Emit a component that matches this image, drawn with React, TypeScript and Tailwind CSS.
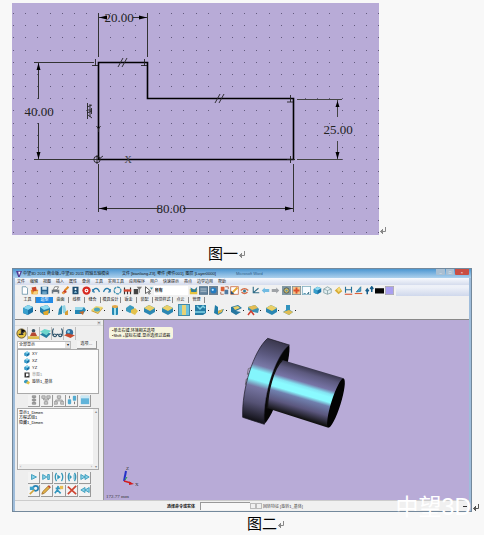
import type { ReactNode } from "react";

const cjk = "font-['Liberation_Sans','Noto_Sans_CJK_SC',sans-serif]";

function ReturnMark({ dark = false }: { dark?: boolean }) {
  return (
    <svg viewBox="0 0 8 9" className={dark ? "h-[9px] w-2 shrink-0 text-[#555]" : "h-[9px] w-2 shrink-0 text-[#888]"} aria-hidden="true">
      <path d="M6.5 1V5.5H2M4 3L1.5 5.5L4 8" fill="none" stroke="currentColor" />
      <path d="M1 5.5L4 3.2V7.8Z" fill="currentColor" />
    </svg>
  );
}

const dots = Array.from({ length: 31 * 19 }, (_, i) => ({
  x: Math.round(13 + (i % 31) * 12.167),
  y: Math.round(13 + Math.floor(i / 31) * 12.17),
}));

function Sketch() {
  return (
    <svg viewBox="12 3 367 232" className="h-[232px] w-[367px] shrink-0 bg-[#b8abd7]" role="img" aria-label="图一">
      {dots.map((d) => (
        <rect key={`${d.x}-${d.y}`} x={d.x} y={d.y} width="1" height="1" fill="#625a7c" />
      ))}
      <g stroke="#333" fill="none">
        <path d="M98.5 13V57M147.5 13V57M99 17.5H106M133 17.5H147" />
        <path d="M34 62.5H94M34 159.5H98M38.5 63V99M38.5 123V159" />
        <path d="M297 99.5H342M297 159.5H342M337.5 100V117M337.5 141V159" stroke="#444" />
        <path d="M98.5 164V212M293.5 164V212M99 208.5H160M183 208.5H293" />
      </g>
      <path
        d="M99 17.5L107 15.5V19.5ZM147 17.5L139 15.5V19.5ZM38.5 63L36.5 70H40.5ZM38.5 159L36.5 152H40.5ZM337.5 101L335.5 107H339.5ZM337.5 159L335.5 152H339.5ZM99 208.5L107 206.5V210.5ZM293 208.5L285 206.5V210.5Z"
        fill="#000"
      />
      <path d="M98.5 159.5V62.5H147.5V98.5H293.5V159.5Z" fill="none" stroke="#000" strokeWidth="1.6" />
      <g stroke="#222" fill="none" strokeWidth="0.9">
        <path d="M118 67L123 58M122 67L127 58M215 103L220 94M219 103L224 94" />
        <path d="M95.500 59V66M92 65.500H98M144.500 59V66M141 65.500H147M290.500 95V102M287 102H293M290.500 156V163M287 159.500H295" />
        <circle cx="97" cy="159.500" r="3.200" />
        <path d="M97 155V164M99 159L103 156" />
        <path d="M96.500 126L98.500 129L100.500 126M98.500 129V132" />
        <path d="M87.500 103V119M90 104V117M87 107L92 105M88 110H92M87 113L92 111M88 115L92 118M91.500 108V114" />
      </g>
      <g className="font-['Liberation_Serif',serif]" fill="#222" fontSize="13" textAnchor="middle">
        <text x="119" y="22">20.00</text>
        <text x="39" y="116">40.00</text>
        <text x="338" y="134">25.00</text>
        <text x="171" y="213">80.00</text>
        <text x="128" y="163" fontSize="10" fill="#444">X</text>
      </g>
    </svg>
  );
}

type Kind =
  | "page" | "open" | "save" | "print" | "brush" | "book" | "target" | "undo" | "redo" | "ring" | "magnet" | "filter" | "pick"
  | "folder" | "screen" | "globe" | "swap" | "edit" | "wheel" | "axes" | "left" | "right" | "at" | "plus" | "frame" | "cube" | "wire"
  | "gold" | "height" | "slope" | "steps" | "black" | "lilac" | "cubeGold" | "twist" | "slab" | "plate" | "cylinder" | "pair" | "panel"
  | "grid" | "bend" | "cut" | "stamp" | "clock" | "person" | "layers" | "glasses" | "ball" | "stack" | "tree" | "tree2" | "pins"
  | "tile" | "play" | "next" | "paren" | "parens" | "fast" | "rewind" | "tag" | "pencil" | "run" | "cross" | "sheet";

const art: Record<Kind, ReactNode> = {
  page: <path d="M3 1H8L10 3V11H3Z" fill="#fff" stroke="#5b8aa0" />,
  open: <><path d="M1 5H11L10 11H2Z" fill="#e69a31" /><path d="M2 2L8 1L9 6L4 8Z" fill="#c84528" /><path d="M5 7H11L9 11H4Z" fill="#f7d27c" /></>,
  save: <><rect x="1" y="1" width="10" height="10" fill="#245f8c" /><rect x="3" y="1" width="6" height="4" fill="#d5e8f2" /><rect x="3" y="7" width="6" height="4" fill="#6aa2c4" /></>,
  print: <><rect x="1" y="5" width="10" height="5" fill="#6b7680" /><path d="M3 5L5 1H10L8 5Z" fill="#fff" stroke="#666" /><path d="M3 8H9V11H3Z" fill="#e8e8e8" /></>,
  brush: <><path d="M10 1L5 6" stroke="#e08a20" strokeWidth="2.500" /><path d="M5 5L8 8L3 11L1 9Z" fill="#c93f24" /><path d="M1 9L5 8L3 11Z" fill="#f0c74d" /></>,
  book: <><rect x="2" y="1" width="8" height="10" fill="#1d4d70" /><circle cx="6" cy="4" r="1.500" fill="#fff" /><path d="M4 9Q6 4 8 9" fill="#9ed4ea" /></>,
  target: <><circle cx="6" cy="6" r="5.500" fill="#d72b21" /><circle cx="6" cy="6" r="2.500" fill="#fff" /><circle cx="6" cy="6" r="1" fill="#d72b21" /></>,
  undo: <path d="M1 8C3 1 8 2 10 8M1 8V4M1 8H4" fill="none" stroke="#277bab" strokeWidth="1.500" />,
  redo: <path d="M11 8C9 1 4 2 2 8M11 8V4M11 8H8" fill="none" stroke="#277bab" strokeWidth="1.500" />,
  ring: <circle cx="6" cy="6" r="4.500" fill="none" stroke="#348bad" strokeWidth="1.600" strokeDasharray="4 1" />,
  magnet: <><path d="M2 11V2M6 11V5M10 11V2" stroke="#333" strokeWidth="1.500" /><path d="M1 6H11" stroke="#d0442e" strokeWidth="3" /></>,
  filter: <><rect x="1" y="4" width="6" height="7" fill="#444" /><path d="M5 1H12L9 5V9H8V5Z" fill="#777" /></>,
  pick: <><path d="M2 1V10L5 8L7 11L8 10L6 7H9Z" fill="#fff" stroke="#333" /><path d="M8 2H12L10 5Z" fill="#3b8da8" /></>,
  folder: <><path d="M1 4H11V11H1Z" fill="#e6c33f" /><path d="M2 2L7 5L11 1L10 8H3Z" fill="#2e7e9c" /></>,
  screen: <><rect x="0.500" y="1" width="11" height="10" fill="#6987a0" stroke="#3a5d79" /><path d="M2 4H10M2 7H10" stroke="#bfcfda" /></>,
  globe: <><rect x="0" y="0" width="12" height="12" fill="#6d8294" /><circle cx="6" cy="6" r="4" fill="#247cc1" /><circle cx="5" cy="5" r="1.500" fill="#bce5ff" /></>,
  swap: <><rect x="1" y="1" width="5" height="6" fill="#d96037" /><rect x="6" y="5" width="5" height="6" fill="#507aa0" /><path d="M7 1H11V4M1 8V11H5" fill="none" stroke="#9a4f38" /></>,
  edit: <><rect x="1" y="1" width="10" height="10" fill="#fff" stroke="#c75f32" /><path d="M3 9L10 2" stroke="#e4ab37" strokeWidth="2.500" /><path d="M1 6V11H6Z" fill="#274f75" /></>,
  wheel: <><path d="M1 6Q6 1 11 6M2 8Q6 12 10 8" fill="none" stroke="#d66b46" strokeWidth="1.800" /><circle cx="6" cy="6.500" r="2" fill="#337c96" /></>,
  axes: <path d="M3 1V9H11M3 9L10 3" fill="none" stroke="#316e88" strokeWidth="1.500" />,
  left: <path d="M1 6L5 2V4H11V8H5V10Z" fill="#71bbe2" />,
  right: <path d="M11 6L7 2V4H1V8H7V10Z" fill="#9fa3a7" />,
  at: <><rect width="12" height="12" fill="#8299a3" /><circle cx="6" cy="6" r="3.500" fill="#e5c254" stroke="#31485a" /><circle cx="6" cy="6" r="1.500" fill="#5296bb" /></>,
  plus: <><rect x="0.500" y="0.500" width="11" height="11" fill="#f0c58c" stroke="#748c96" /><path d="M6 2V10M2 6H10" stroke="#db4e29" strokeWidth="2.500" /></>,
  frame: <><rect x="0.500" y="0.500" width="11" height="11" fill="#f7fcff" stroke="#78a9bd" /><path d="M2 10H5M9 8V10H7" stroke="#267696" /></>,
  cube: <><path d="M1 4L6 1L11 3V8L6 11L1 9Z" fill="#1871a5" /><path d="M1 4L6 1L11 3L6 6Z" fill="#8bd8ef" /><path d="M1 4L6 6V11L1 9Z" fill="#399fcc" /></>,
  wire: <path d="M1 4L6 1L11 4V9L6 11L1 9ZM1 4L6 6L11 4M6 6V11" fill="#e2eff1" stroke="#7d9a9f" />,
  gold: <><path d="M1 6L7 1L11 7L6 11Z" fill="#d8ac38" /><path d="M4 5L7 1L9 6L6 8Z" fill="#f4dc78" /></>,
  height: <><path d="M2 1V9M10 1V9M2 5H10" stroke="#267198" strokeWidth="1.500" /><path d="M1 11H11" stroke="#d85836" strokeWidth="1.500" /></>,
  slope: <><path d="M3 8L9 1V7Z" fill="#4fa6d0" stroke="#25769c" /><path d="M1 10H11" stroke="#dd633c" strokeWidth="1.500" /></>,
  steps: <path d="M3 11V5M1 7L3 4L5 7M9 8V1M7 4L9 1L11 4" fill="none" stroke="#175e8c" strokeWidth="2" />,
  black: <rect y="3" width="12" height="7" fill="#050505" />,
  lilac: <rect x="0.500" y="0.500" width="11" height="11" fill="#a99ff0" stroke="#aaa" />,
  cubeGold: <><path d="M1 3L8 1L11 4V9L5 11L1 8Z" fill="#2380ae" /><path d="M1 3L8 1L11 4L5 6Z" fill="#8fdcf1" /><path d="M4 8L10 6L9 11H5Z" fill="#e2aa2f" /></>,
  twist: <><path d="M1 11L2 5L5 1V10Z" fill="#2889b0" /><path d="M6 9L5 2L8 1L10 10Z" fill="#91d4e3" /><path d="M8 8L11 6V11H8Z" fill="#d79c35" /></>,
  slab: <><path d="M1 3H10L12 6L9 10H1Z" fill="#2387b5" /><path d="M1 3H10L8 6H1Z" fill="#9bd8e9" /><path d="M5 8L10 7L9 11Z" fill="#c56a2c" /></>,
  plate: <><path d="M0 7L5 3L12 4L7 10Z" fill="#c99b34" /><path d="M0 6L5 2L12 3L7 9Z" fill="#f0d86e" /><ellipse cx="6" cy="5.500" rx="3" ry="2" fill="#4ea4b8" /></>,
  cylinder: <><rect x="3" y="2" width="6" height="9" rx="1" fill="#2589b4" /><rect x="5" y="3" width="2" height="8" fill="#a2e0ed" /><ellipse cx="6" cy="2.500" rx="3" ry="1.500" fill="#e2a749" /></>,
  pair: <><path d="M0 4L4 1L8 3V7L4 9L0 7Z" fill="#3b9bbd" /><path d="M5 6L9 4L12 7L9 11L5 9Z" fill="#e3c24c" /></>,
  block: <><path d="M1 4L6 1L12 4V8L7 11L1 8Z" fill="#2b87b3" /><path d="M1 4L6 1L12 4L7 7Z" fill="#ead067" /></>,
  panel: <><rect x="0.500" y="0.500" width="11" height="11" fill="#6cc2dd" stroke="#4389a7" /><rect x="4" y="1" width="4" height="10" fill="#e8d376" /></>,
  grid: <><path d="M0 1H11V9L8 11H0Z" fill="#257aa3" /><path d="M0 8H10M2 2L5 5L8 2L10 4" fill="none" stroke="#83d3e6" strokeWidth="1.500" /></>,
  bend: <><path d="M2 1L5 3V7L11 5L9 9L5 11L1 9Z" fill="#227da7" /><path d="M5 7L10 5L9 8L5 10Z" fill="#dfb748" /></>,
  cut: <><path d="M1 3L8 1L12 4L6 7L11 8L6 11L1 8Z" fill="#2677a0" /><path d="M3 3L8 2L10 4L5 6Z" fill="#ead067" /></>,
  warp: <><path d="M1 3L8 1L12 5L11 9L6 8L1 6Z" fill="#3a91b5" /><path d="M1 3L8 1L11 4L5 6Z" fill="#e5bd52" /><path d="M1 11L4 7L7 11" fill="none" stroke="#d13f2f" strokeWidth="1.500" /></>,
  stamp: <><path d="M1 8L4 6V1H8V6L11 8L7 11Z" fill="#3293bd" /><path d="M1 8L7 6L11 8L7 11Z" fill="#e1bd54" /></>,
  clock: <><circle cx="6" cy="6" r="5" fill="#e4c344" stroke="#645124" /><path d="M6 1V6L10 3M3 7H8" stroke="#333" strokeWidth="1.500" /></>,
  person: <><circle cx="6" cy="3" r="2" fill="#3a5362" /><path d="M4 5L8 5L10 9H2Z" fill="#b64932" /><path d="M0 9H12V12H0Z" fill="#dcbd4b" /></>,
  layers: <><path d="M0 7L5 4L12 6L7 11Z" fill="#247ea0" /><path d="M0 4L5 1L12 3L7 8Z" fill="#6ed6cc" /></>,
  glasses: <path d="M2 1Q0 1 1 8M10 1Q12 1 11 8M1 8Q3 5 5 8Q4 11 1 8M7 8Q9 5 11 8Q9 11 7 8M5 7H7" fill="none" stroke="#284f67" strokeWidth="1.200" />,
  ball: <><circle cx="6" cy="5" r="4" fill="#326e9c" /><path d="M0 8L4 6L12 8L7 11Z" fill="#c84a2d" /><circle cx="5" cy="4" r="1.500" fill="#8ad2ec" /></>,
  stack: <path d="M4 1H8V3H4ZM4 5H8V7H4ZM4 9H8V11H4ZM6 3V9" fill="#aaa" stroke="#888" />,
  tree: <path d="M1 1H5V4H1ZM7 1H11V4H7ZM4 8H8V11H4ZM3 4V6H9V4M6 6V8" fill="#ccc" stroke="#999" />,
  tree2: <path d="M4 1H8V4H4ZM0 8H4V11H0ZM8 8H12V11H8ZM6 4V6M2 8V6H10V8" fill="#ccc" stroke="#999" />,
  pins: <><rect x="1" y="5" width="4" height="6" rx="1" fill="#54abd0" /><rect x="7" y="1" width="4" height="6" rx="1" fill="#54abd0" /><path d="M3 4V1M9 8V11" stroke="#666" /></>,
  tile: <><rect x="1" y="1" width="10" height="10" fill="#62b4da" /><rect x="1" y="1" width="10" height="3" fill="#c9e8f5" /></>,
  play: <path d="M3 3L9 6L3 9Z" fill="#8bd1e7" stroke="#3297b9" />,
  next: <path d="M2 3L7 6L2 9ZM8 3H10V9H8Z" fill="#8bd1e7" stroke="#3297b9" />,
  paren: <><path d="M3 1Q0 6 3 11M9 1Q12 6 9 11" fill="none" stroke="#3297b9" strokeWidth="1.500" /><path d="M4 3L8 6L4 9Z" fill="#3297b9" /></>,
  parens: <><path d="M3 1Q0 6 3 11M9 1Q12 6 9 11" fill="none" stroke="#3297b9" strokeWidth="1.500" /><path d="M3 3L6 6L3 9ZM8 3H9V9H8Z" fill="#3297b9" /></>,
  fast: <path d="M1 3L6 6L1 9ZM6 3L11 6L6 9Z" fill="#8bd1e7" stroke="#3297b9" />,
  rewind: <path d="M11 3L6 6L11 9ZM6 3L1 6L6 9Z" fill="#8bd1e7" stroke="#3297b9" />,
  tag: <><circle cx="8" cy="4" r="3" fill="none" stroke="#2581b4" strokeWidth="2" /><path d="M1 2H6V6H1Z" fill="#3ba3cd" /><path d="M1 11L6 6" stroke="#d3a53c" strokeWidth="2" /></>,
  pencil: <><path d="M1 11L2 8L9 1L11 3L4 10Z" fill="#e2b245" stroke="#9c6d2c" /><path d="M9 1L11 3" stroke="#c04832" strokeWidth="2" /></>,
  run: <><path d="M5 1L4 6L1 10M4 6L8 10M2 4H8" fill="none" stroke="#3196be" strokeWidth="2" /><path d="M7 1H11V5H7Z" fill="#e7bd54" /></>,
  cross: <path d="M1 2L11 11M11 1L1 11" stroke="#ce4431" strokeWidth="2" />,
  sheet: <><rect x="1" y="1" width="10" height="10" fill="#333" /><path d="M4 3H9V8H7L4 9Z" fill="#fff" /></>,
} as Record<Kind, ReactNode>;

function Icon({ kind, size = "h-[9px] w-[9px]" }: { kind: Kind; size?: string }) {
  return <svg viewBox="0 0 12 12" className={`${size} shrink-0`} aria-hidden="true">{art[kind]}</svg>;
}

function IconButton({ kind }: { kind: Kind }) {
  return (
    <button type="button" aria-label={kind} className="flex h-[10px] w-[10px] shrink-0 items-center justify-center">
      <Icon kind={kind} />
    </button>
  );
}

function PanelRow({ kinds }: { kinds: Kind[] }) {
  return (
    <div className="flex h-[13px] w-[76px] items-center justify-between pl-[13px]">
      {kinds.map((k) => (
        <button key={k} type="button" aria-label={k} className="flex h-3 w-3 items-center justify-center border-r border-b border-[#999] bg-[#f3f3f3]">
          <Icon kind={k} size="h-[10px] w-[10px]" />
        </button>
      ))}
    </div>
  );
}

const fileTools: Kind[] = ["page", "open", "save", "print", "brush", "book", "target", "undo", "redo", "ring", "magnet", "filter", "pick"];
const viewTools: Kind[] = ["folder", "screen", "globe", "swap", "edit", "wheel", "axes", "left", "right", "at", "plus", "frame", "cube", "wire", "gold", "height", "slope", "steps", "black", "lilac"];
const modelTools = ["cube", "cubeGold", "twist", "slab", "plate", "cylinder", "pair", "block", "block", "panel", "grid", "bend", "cut", "warp", "block", "stamp"] as Kind[];
const menus = ["文件", "编辑", "视图", "插入", "属性", "查询", "工具", "实用工具", "应用程序", "用户", "快速提示", "亮点", "边学边用", "帮助"];
const tabs = ["工具", "造型", "曲面", "线框", "缝合", "模具设计", "钣金", "装配", "视觉样式", "点云", "管理"];
const tree: { icon: Kind; label: string; faded?: boolean }[] = [
  { icon: "cube", label: "XY" },
  { icon: "cube", label: "XZ" },
  { icon: "cube", label: "YZ" },
  { icon: "sheet", label: "草图1", faded: true },
  { icon: "pair", label: "旋转1_基体" },
];

function SidePanel() {
  return (
    <aside className="flex w-[89px] shrink-0 flex-col border-r border-[#999] bg-[#eee]">
      <div className="flex h-[6px] items-center justify-end border-b border-[#ddd] pr-[2px]">
        <button type="button" aria-label="关闭" className="flex h-1 w-1 items-center justify-center bg-[#ddd] text-[4px] leading-none">×</button>
      </div>
      <div className="flex h-[14px] items-center px-px">
        {(["clock", "person", "layers", "glasses", "ball"] as Kind[]).map((k) => (
          <button key={k} type="button" aria-label={k} className="flex h-[13px] w-[12px] items-center justify-center border-r border-[#bbb]">
            <Icon kind={k} size="h-[11px] w-[11px]" />
          </button>
        ))}
      </div>
      <div className="flex h-[9px] items-center justify-between pr-[6px] pl-[2px]">
        <div className="flex h-2 w-[54px] items-center border border-[#bbb] bg-white">
          <select aria-label="显示" className="h-[6px] min-w-0 flex-1 appearance-none px-px text-[4px] leading-[6px]">
            <option>全部显示</option>
          </select>
          <span className="w-[5px] bg-[#e4e4e4] text-center text-[4px] leading-[6px]">▾</span>
        </div>
        <button type="button" className="h-2 w-[20px] border-r border-b border-[#999] bg-[#f3f3f3] text-[4px] leading-[6px]">选项…</button>
      </div>
      <ul className="mr-1 ml-[2px] h-[45px] border border-[#aaa] bg-[#fcfcfc] pl-[6px]">
        {tree.map((t) => (
          <li key={t.label} className={t.faded ? "flex h-[7px] items-center gap-[2px] text-[#999]" : "flex h-[7px] items-center gap-[2px]"}>
            <Icon kind={t.icon} size="h-[6px] w-[6px]" />
            <span className="text-[4px] leading-[7px]">{t.label}</span>
          </li>
        ))}
      </ul>
      <div className="pb-px"><PanelRow kinds={["stack", "tree", "tree2", "pins", "tile"]} /></div>
      <div className="mr-1 ml-[2px] flex h-[62px] border border-[#aaa] bg-[#fcfcfc]">
        <div className="flex min-w-0 flex-1 flex-col pt-px pl-px text-[4px] leading-[5px] text-black">
          <span>显示1_Dimen</span>
          <span>方程式组1</span>
          <span>隐藏1_Dimen</span>
          <div className="mt-auto flex h-[5px] justify-between bg-[#eee] px-px text-[#888]"><span>‹</span><span>›</span></div>
        </div>
        <div className="flex w-[5px] flex-col items-center justify-between bg-[#eee] text-[4px] leading-[5px] text-[#888]"><span>▴</span><span>▾</span></div>
      </div>
      <div className="pt-px"><PanelRow kinds={["play", "next", "paren", "parens", "fast"]} /></div>
      <PanelRow kinds={["tag", "pencil", "run", "cross", "rewind"]} />
    </aside>
  );
}

function Viewport() {
  return (
    <div className="relative min-w-0 flex-1 bg-[#b8abd7]">
      <svg viewBox="104 319 365 180" preserveAspectRatio="xMinYMin meet" className="block h-[180px] w-full" role="img" aria-label="旋转基体">
        <defs>
          <linearGradient id="shaft" gradientUnits="userSpaceOnUse" x1="157" y1="117" x2="114" y2="263">
            <stop offset="0" stopColor="#38364c" />
            <stop offset=".12" stopColor="#5c597e" />
            <stop offset=".3" stopColor="#7775a7" />
            <stop offset=".38" stopColor="#83e4f2" />
            <stop offset=".44" stopColor="#8afaff" />
            <stop offset=".54" stopColor="#8afaff" />
            <stop offset=".62" stopColor="#7080ae" />
            <stop offset=".8" stopColor="#5b577e" />
            <stop offset="1" stopColor="#111" />
          </linearGradient>
          <linearGradient id="flange" gradientUnits="userSpaceOnUse" x1="120" y1="52" x2="50" y2="290">
            <stop offset="0" stopColor="#39364b" />
            <stop offset=".2" stopColor="#5b597f" />
            <stop offset=".35" stopColor="#7979a7" />
            <stop offset=".42" stopColor="#83f5fc" />
            <stop offset=".53" stopColor="#83f5fc" />
            <stop offset=".61" stopColor="#7776a3" />
            <stop offset=".8" stopColor="#555274" />
            <stop offset="1" stopColor="#15141c" />
          </linearGradient>
        </defs>
        <g transform="translate(230 320) scale(.3333)">
          <path d="M55 143L69 138L66 155L52 160ZM49 174L62 171L59 187L46 190Z" fill="none" stroke="#555" strokeWidth="2" />
          <path d="M178 72C184 110 142 270 103 310C94 250 135 95 178 72Z" fill="#050505" />
          <path d="M113 52L178 72C135 105 98 230 103 310L38 289C35 205 70 90 113 52Z" fill="url(#flange)" stroke="#161520" strokeWidth="2" />
          <path d="M157 117L341 172L295 320L112 262C112 215 128 145 157 117Z" fill="url(#shaft)" />
          <path d="M157 117C128 145 112 215 112 262" fill="none" stroke="#111" strokeWidth="5" />
          <ellipse cx="318" cy="246" rx="14" ry="77" transform="rotate(17.300 318 246)" fill="#030303" />
        </g>
        <path d="M124 480L126 470" stroke="#2530c8" strokeWidth="2" />
        <path d="M124 480L131 482" stroke="#d31c1c" strokeWidth="1.500" />
        <path d="M134 483L129 480.500V484Z" fill="#d31c1c" />
        <path d="M125 479L127 476" stroke="#25a343" />
        <g fontSize="5" fill="#333" className="font-['Liberation_Serif',serif]">
          <text x="126" y="469">Z</text>
          <text x="135" y="485">X</text>
          <text x="106" y="497">172.77 mm</text>
        </g>
      </svg>
      <div className="absolute top-[7px] left-[5px] rounded-[2px] bg-[#f7f5df] px-[3px] py-px text-[4px] leading-[5px] whitespace-nowrap text-black">
        <p>•单击右键-环境相关选项</p>
        <p>•Shift +鼠标右键-显示选择过滤器</p>
      </div>
    </div>
  );
}

function CadWindow() {
  return (
    <div className={`${cjk} relative min-w-0 flex-1 border border-[#74899c] bg-[#9fbddb] text-[#111]`}>
      <header className="flex h-[9px] items-center bg-linear-to-b from-[#4b97d1] to-[#add1ed] pl-[3px] text-[4px] leading-[9px] whitespace-nowrap">
        <svg viewBox="0 0 8 8" className="mr-px h-[6px] w-[6px]" aria-hidden="true"><path d="M0 0H8L5 8H3Z" fill="#503a93" /><path d="M3 1H6L4 6Z" fill="#fff" /></svg>
        <span className="w-[99px]">中望3D 2011 商业版+中望3D 2011 四轴五轴模块</span>
        <span className="w-[114px]">文件 [bianliang.Z3], 零件 [零件001], 图层 [Layer0000]</span>
        <span className="text-[#315f89]">Microsoft Word</span>
        <span className="mr-[2px] ml-auto flex gap-px self-start text-[4px] leading-[5px]">
          <button type="button" aria-label="最小化" className="h-[6px] w-[9px] rounded-b-[1px] bg-[#a9bfd2] text-white">–</button>
          <button type="button" aria-label="最大化" className="h-[6px] w-2 rounded-b-[1px] bg-[#a9bfd2] text-white">□</button>
          <button type="button" aria-label="关闭" className="h-[6px] w-[14px] rounded-b-[1px] bg-[#c94e43] text-white">×</button>
        </span>
      </header>
      <div className="mr-[2px] ml-[2px] bg-[#f0f0f0]">
        <nav className="flex h-[7px] items-center gap-[5px] bg-linear-to-b from-[#f7f9fd] to-[#d5dced] pl-[2px] text-[4px] leading-[7px]">
          {menus.map((m) => <button key={m} type="button" className="shrink-0 whitespace-nowrap">{m}</button>)}
        </nav>
        <div className="flex h-[11px] items-start bg-linear-to-b from-[#eef1f8] from-20% to-[#cfd8ec]">
          <div className="flex h-[11px] w-[381px] items-center justify-between bg-[#f1f1f1] pr-px pl-1">
            {fileTools.map((k) => <IconButton key={k} kind={k} />)}
            <select aria-label="过滤" className="h-[9px] w-[34px] appearance-none bg-white pl-px text-[4px] leading-2 font-bold"><option>所有</option></select>
            {viewTools.map((k) => <IconButton key={k} kind={k} />)}
          </div>
        </div>
        <div className="flex h-[7px] items-center pl-[5px] text-[4px] leading-[6px]" role="tablist">
          {tabs.map((t) => (
            <button
              key={t}
              type="button"
              role="tab"
              aria-selected={t === "造型"}
              className={t === "造型"
                ? "h-[6px] w-[17px] bg-[#238be5] text-white"
                : t.length > 2
                  ? "h-[6px] w-5 border-r border-[#888]"
                  : "h-[6px] w-4 border-r border-[#888]"}
            >
              {t}
            </button>
          ))}
        </div>
        <div className="flex h-4 w-[281px] items-start justify-between pt-px pl-[7px]">
          {modelTools.map((k, i) => (
            <button key={i} type="button" aria-label={k} className="flex items-center gap-px">
              <Icon kind={k} size="h-3 w-3" />
              <span className="h-px w-px bg-[#222]" />
            </button>
          ))}
        </div>
        <div className="flex border-t border-[#888]">
          <SidePanel />
          <Viewport />
        </div>
        <footer className="flex h-[11px] items-center border-t border-[#ccc] pl-[152px] text-[4px] leading-[9px]">
          <label htmlFor="command" className="w-[33px] font-bold whitespace-nowrap">选择命令或实体</label>
          <input id="command" className="h-2 w-[50px] border-t border-l border-[#999] bg-[#f8f8f8]" />
          <button type="button" aria-label="减少" className="h-[6px] w-[6px] border border-[#bbb]" />
          <button type="button" aria-label="增加" className="h-[6px] w-[6px] border border-[#bbb]" />
          <span className="ml-px text-[#444]">回转特征 [旋转1_基体]</span>
          <span className="mr-[2px] ml-auto h-px w-1 bg-[#333]" />
        </footer>
      </div>
      <p className="absolute right-0 -bottom-2 text-[23px] leading-6 whitespace-nowrap text-white">中望3D</p>
    </div>
  );
}

export default function App() {
  return (
    <main className="min-h-[535px] bg-[#f8f8f8] pt-[3px] pr-1 pl-3">
      <div className="flex items-end">
        <Sketch />
        <ReturnMark />
      </div>
      <p className={`${cjk} flex h-[33px] items-center justify-center pt-[5px] pr-[38px] text-[15px] leading-5`}>
        图一<ReturnMark />
      </p>
      <div className="flex items-end">
        <CadWindow />
        <ReturnMark dark />
      </div>
      <p className={`${cjk} flex h-6 items-center justify-center pl-10 text-[15px] leading-5`}>
        图二<ReturnMark />
      </p>
    </main>
  );
}
